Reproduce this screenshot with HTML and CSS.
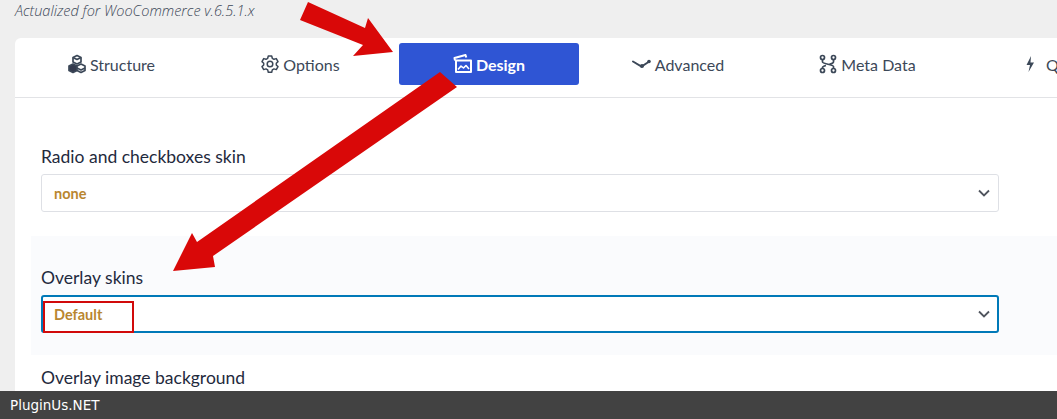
FILE: index.html
```html
<!DOCTYPE html>
<html lang="en">
<head>
<meta charset="utf-8">
<title>Design tab</title>
<link rel="stylesheet" href="styles.css">
</head>
<body>
<div class="page">
  <p class="note">Actualized for WooCommerce v.6.5.1.x</p>
  <main class="card">
    <nav class="tabs">
      <a class="tab">
        <svg class="icon" viewBox="0 0 20 20" fill="none" stroke="currentColor" stroke-width="1.7" stroke-linejoin="round"><path d="M10 1.5l4 2v4.5l-4 2-4-2V3.500z" fill="#fff"/><path d="M6 10l4 2v4.500l-4 2-4-2V12z" fill="#333a4d"/><path d="M14 10l4 2v4.500l-4 2-4-2V12z" fill="#fff"/><path d="M6 3.500l4 2 4-2M10 14l4 2 4-2"/></svg>
        Structure
      </a>
      <a class="tab">
        <svg class="icon" viewBox="0 0 20 20" fill="none" stroke="currentColor" stroke-width="1.500" stroke-linejoin="round"><path d="M8.300 2h3.400l.6 2.300 1.700 1 2.300-.7 1.700 3-1.700 1.600v1.800l1.700 1.600-1.700 3-2.300-.7-1.700 1-.6 2.300H8.300l-.6-2.300-1.700-1-2.300.7-1.700-3 1.700-1.600V9.200L2 7.600l1.700-3 2.300.7 1.700-1z"/><circle cx="10" cy="10" r="2.800"/></svg>
        Options
      </a>
      <a class="tab tab-active">
        <svg class="icon" viewBox="0 0 20 20" fill="none" stroke="currentColor" stroke-width="2" stroke-linejoin="round"><path d="M2 6.500L1.500 4l11-3 .8 2.500"/><path d="M3 6.500h15v11.500H3z"/><path d="M5 15.500l3-3.500 2.500 2 2.500-2.500 3 3.500" stroke-width="1.600"/></svg>
        Design
      </a>
      <a class="tab">
        <svg class="icon icon-wide" viewBox="0 0 20 12" fill="none" stroke="currentColor" stroke-width="2" stroke-linecap="round"><path d="M1 3.500l8.500 5 7-4.500"/><circle cx="17" cy="3.500" r="1.800" fill="currentColor" stroke="none"/><circle cx="10" cy="8" r="2" fill="currentColor" stroke="none"/></svg>
        Advanced
      </a>
      <a class="tab">
        <svg class="icon" viewBox="0 0 20 20" fill="none" stroke="currentColor" stroke-width="1.700"><circle cx="4.500" cy="3.500" r="2"/><circle cx="15.500" cy="3.500" r="2"/><circle cx="4.500" cy="16.500" r="2"/><circle cx="15.500" cy="16.500" r="2"/><path d="M4.500 5.500v2.500c0 2 11 2.500 11 4.500v2M15.500 5.500v2.500c0 1-2 1.700-4 2.300M8 11.500c-2 .5-3.500 1-3.500 2v1"/></svg>
        Meta Data
      </a>
      <a class="tab">
        <svg class="icon icon-bolt" viewBox="0 0 10 18" fill="currentColor"><path d="M6 1L1.500 10H5l-1.500 7L9 7.500H5.500z"/></svg>
        Quick
      </a>
    </nav>
    <div class="content">
      <section class="field">
        <h4 class="label">Radio and checkboxes skin</h4>
        <div class="select">
          <span class="value">none</span>
          <svg class="chevron" viewBox="0 0 12 8" fill="none" stroke="currentColor" stroke-width="1.800"><path d="M1 1.500l5 5 5-5"/></svg>
        </div>
      </section>
      <section class="field field-shaded">
        <h4 class="label">Overlay skins</h4>
        <div class="select select-focus">
          <span class="value">Default</span>
          <span class="highlight"></span>
          <svg class="chevron" viewBox="0 0 12 8" fill="none" stroke="currentColor" stroke-width="1.800"><path d="M1 1.500l5 5 5-5"/></svg>
        </div>
      </section>
      <section class="field">
        <h4 class="label">Overlay image background</h4>
      </section>
    </div>
  </main>
  <svg class="arrows" viewBox="0 0 1057 419" width="1057" height="419">
    <path d="M308 2L300 20L363 45L353 56L393 52L368 18L365 28Z"/>
    <path d="M440 72L457 87L213 256L215 267L173 271L192 233L197 242Z"/>
  </svg>
  <footer class="bar">PluginUs.NET</footer>
</div>
</body>
</html>
```
FILE: styles.css
```css
* { box-sizing: border-box; }
html, body { margin: 0; padding: 0; }
body { background: #efefef; font-family: "Lato", "Noto Sans", sans-serif; }
.page { position: relative; width: 1057px; height: 419px; overflow: hidden; }
.note { margin: 0; height: 38px; padding: 2px 0 0 15px; font: italic 300 14.5px/18px "Open Sans", sans-serif; color: #3c4858; }
.card { margin-left: 15px; background: #fff; border-radius: 6px 0 0 0; height: 381px; overflow: hidden; }
.tabs { display: flex; gap: 9px; height: 60px; padding: 5px 0 0 6px; border-bottom: 1px solid #e2e3e6; }
.tab { flex: 0 0 180px; height: 42px; display: flex; align-items: center; justify-content: center; gap: 3px; font-size: 16px; color: #3c4858; border-radius: 3px; white-space: nowrap; }
.tab-active { background: #2f55d4; color: #fff; font-weight: 700; }
.icon { width: 20px; height: 20px; flex: none; }
.icon-wide { height: 12px; }
.icon-bolt { width: 10px; height: 18px; margin-right: 8px; }
.content { padding-top: 36px; }
.field { padding: 11px 58px 24px 26px; }
.field-shaded { margin-left: 16px; padding: 30px 58px 22px 10px; background: #fafbfd; margin-top: 0; }
.label { margin: 0 0 6px; font-size: 17.5px; line-height: 23px; font-weight: 400; color: #1f2a3d; }
.select { position: relative; height: 38px; display: flex; align-items: center; justify-content: space-between; padding: 0 8px 0 12px; background: #fff; border: 1px solid #dee0e5; border-radius: 3px; }
.select-focus { border: 2px solid #0079b8; padding-left: 11px; padding-right: 7px; }
.value { font-size: 14.5px; font-weight: 700; color: #b9862f; }
.chevron { width: 12px; height: 8px; color: #50555e; }
.highlight { position: absolute; left: 0; top: 4px; width: 91px; height: 32px; border: 2px solid #d10a0a; }
.arrows { position: absolute; left: 0; top: 0; fill: #d90808; pointer-events: none; }
.bar { position: absolute; left: 0; right: 0; bottom: 0; height: 28px; padding-left: 10px; background: #424242; color: #fff; font: 13.5px/28px "DejaVu Sans", sans-serif; letter-spacing: 0; }
```
